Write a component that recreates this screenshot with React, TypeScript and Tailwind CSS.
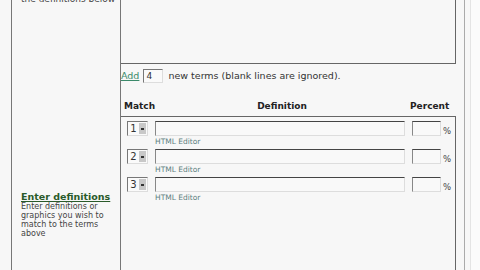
const font = "font-['DejaVu_Sans',Verdana,sans-serif]";

const rows = ['1', '2', '3'];

const SelectBox = ({ value }: { value: string }) => (
  <div className="flex h-[15px] w-[21px] items-center border border-t-[#777] border-l-[#777] border-b-[#ddd] border-r-[#ddd] bg-[#fafafa]">
    <span className="w-[11px] text-center text-[10px] leading-none text-[#333]">{value}</span>
    <span className="flex h-[11px] w-[7px] items-center justify-center bg-[#c8c8c8]">
      <span className="block h-[2px] w-[3px] bg-[#333]" />
    </span>
  </div>
);

const App = () => {
  return (
    <div className={`flex h-[270px] w-[480px] overflow-hidden bg-[#f7f7f7] text-[#333] ${font}`}>
      <div className="w-[11px] shrink-0" />

      {/* left column */}
      <div className="flex w-[110px] shrink-0 flex-col border-x border-[#777] pl-[9px]">
        <p className="-mt-[5px] text-[9px] leading-[9px] text-[#444]">the definitions below</p>
        <div className="mt-[187px] flex flex-col">
          <a className="block text-[9.5px] font-bold leading-[11px] text-[#2a5a2a] underline">Enter definitions</a>
          <p className="text-[8px] leading-[9px] text-[#444]">
            Enter definitions or
            <br />
            graphics you wish to
            <br />
            match to the terms
            <br />
            above
          </p>
        </div>
      </div>

      {/* main column */}
      <div className="flex w-[335px] shrink-0 flex-col">
        <div className="h-[64px] border-b border-r border-[#666]" />

        <div className="mt-[5px] flex h-[14px] items-center text-[9.5px]">
          <a className="text-[#3b8a6a] underline">Add</a>
          <div className="ml-[4px] h-[14px] w-[20px] border border-t-[#777] border-l-[#777] border-b-[#ddd] border-r-[#ddd] bg-[#fafafa] pl-[2px] text-[9px] leading-[12px]">
            4
          </div>
          <span className="ml-[5px]">new terms (blank lines are ignored).</span>
        </div>

        <div className="mt-[18px] flex h-[12px] items-center text-[9px] font-bold text-[#222]">
          <span className="w-[35px] pl-[3px]">Match</span>
          <span className="w-[252px] text-center">Definition</span>
          <span className="pl-[2px]">Percent</span>
        </div>

        <div className="mt-[3px] flex flex-1 flex-col gap-[3px] border-t border-r border-[#666] pl-[6px] pt-[4px]">
          {rows.map((n) => (
            <div key={n} className="flex flex-col">
              <div className="flex h-[15px] items-start">
                <SelectBox value={n} />
                <div className="ml-[7px] h-[15px] w-[250px] border border-t-[#444] border-l-[#888] border-b-[#ddd] border-r-[#ddd] bg-[#f9f9f9]" />
                <div className="ml-[7px] h-[15px] w-[29px] border border-t-[#444] border-l-[#888] border-b-[#ddd] border-r-[#ddd] bg-[#f9f9f9]" />
                <span className="ml-[2px] mt-[4px] text-[8.5px] leading-[12px] text-[#444]">%</span>
              </div>
              <span className="ml-[28px] mt-[2px] text-[7.5px] leading-[8px] text-[#5d7f7f]">HTML Editor</span>
            </div>
          ))}
        </div>
      </div>

      {/* right edge */}
      <div className="ml-[8px] w-[1px] shrink-0 bg-[#aaa]" />
      <div className="ml-[5px] w-[1px] shrink-0 bg-[#e4e4e4]" />
      <div className="flex-1 bg-[#fbfbfb]" />
    </div>
  );
};

export default App;
